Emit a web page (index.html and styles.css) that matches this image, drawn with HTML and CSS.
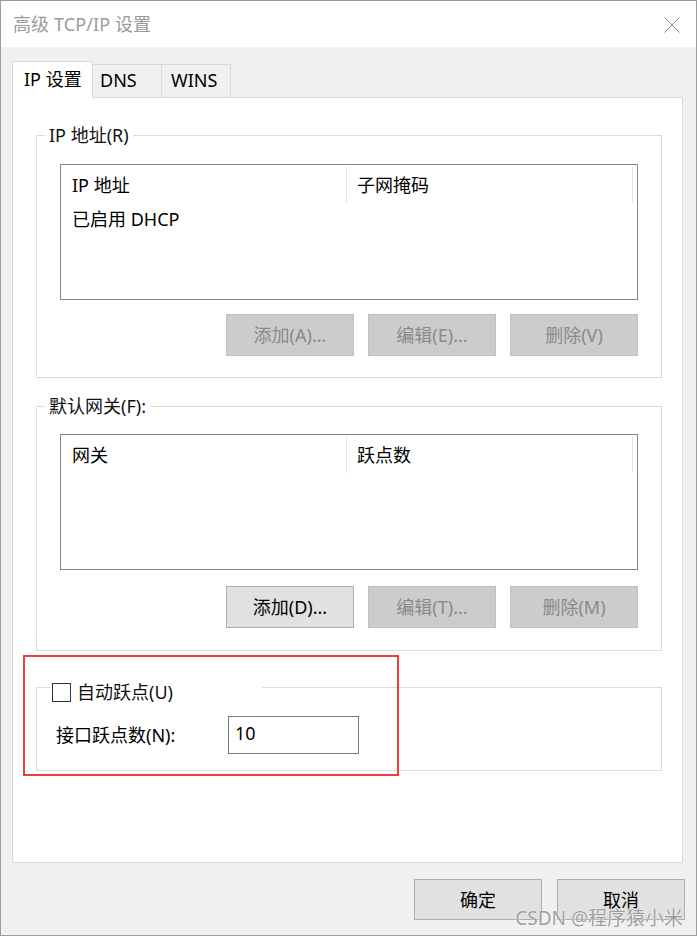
FILE: index.html
```html
<!DOCTYPE html>
<html lang="zh-CN">
<head>
<meta charset="utf-8">
<title>高级 TCP/IP 设置</title>
<link rel="stylesheet" href="styles.css">
</head>
<body>
<div class="window">
  <div class="titlebar">
    <span class="title">高级 TCP/IP 设置</span>
    <svg class="close" width="16" height="16" viewBox="0 0 16 16"><path d="M0.5 0.5 L15.5 15.5 M15.5 0.5 L0.5 15.5" stroke="#8a8a8a" stroke-width="1" fill="none"/></svg>
  </div>
  <div class="body">
    <div class="tabs">
      <div class="tab tab-active">IP 设置</div>
      <div class="tab tab-dns">DNS</div>
      <div class="tab tab-wins">WINS</div>
    </div>
    <div class="panel">
      <fieldset class="group group-ip">
        <legend class="legend">IP 地址(R)</legend>
        <div class="group-body">
          <div class="list">
            <div class="list-head">
              <div class="col col-1">IP 地址</div>
              <div class="col col-2">子网掩码</div>
            </div>
            <div class="list-row">已启用 DHCP</div>
          </div>
          <div class="btn-row btn-row-1">
            <div class="btn btn-disabled">添加(A)...</div>
            <div class="btn btn-disabled">编辑(E)...</div>
            <div class="btn btn-disabled">删除(V)</div>
          </div>
        </div>
      </fieldset>
      <fieldset class="group group-gw">
        <legend class="legend">默认网关(F):</legend>
        <div class="group-body">
          <div class="list">
            <div class="list-head">
              <div class="col col-1">网关</div>
              <div class="col col-2">跃点数</div>
            </div>
          </div>
          <div class="btn-row btn-row-2">
            <div class="btn">添加(D)...</div>
            <div class="btn btn-disabled">编辑(T)...</div>
            <div class="btn btn-disabled">删除(M)</div>
          </div>
        </div>
      </fieldset>
      <fieldset class="group group-metric">
        <legend class="legend legend-check">
          <span class="check-wrap"><span class="checkbox"></span><span class="check-label">自动跃点(U)</span></span>
        </legend>
        <div class="metric-row">
          <span class="metric-label">接口跃点数(N):</span>
          <div class="input">10</div>
        </div>
      </fieldset>
    </div>
    <div class="footer">
      <div class="btn btn-footer">确定</div>
      <div class="btn btn-footer">取消</div>
    </div>
  </div>
  <div class="highlight"></div>
  <div class="watermark">CSDN @程序猿小米</div>
</div>
</body>
</html>
```
FILE: styles.css
```css
html, body {
  margin: 0;
  padding: 0;
}
body {
  font-family: "Noto Sans", "Noto Sans CJK SC", sans-serif;
  font-size: 18px;
  color: #000;
  background: #f0f0f0;
}
.window {
  position: relative;
  width: 697px;
  height: 936px;
  box-sizing: border-box;
  border: 1px solid #9c9c9c;
  background: #f0f0f0;
  display: flex;
  flex-direction: column;
}
.titlebar {
  height: 46px;
  background: #fff;
  display: flex;
  align-items: center;
  padding-left: 12px;
  flex-shrink: 0;
}
.title {
  color: #9a9a9a;
  font-size: 18px;
  line-height: 24px;
  margin-top: -1px;
  letter-spacing: 0.1px;
}
.close {
  margin-left: auto;
  margin-right: 16px;
  margin-top: 1px;
}
.body {
  padding: 14px 13px 0 11px;
  display: flex;
  flex-direction: column;
}
.tabs {
  display: flex;
  align-items: flex-end;
  height: 36px;
  position: relative;
  z-index: 1;
}
.tab {
  box-sizing: border-box;
  height: 33px;
  line-height: 31px;
  border: 1px solid #d9d9d9;
  border-bottom: none;
  border-left: none;
  background: #f0f0f0;
  width: 69px;
}
.tab-active {
  height: 37px;
  line-height: 34px;
  width: 81px;
  border-left: 1px solid #d9d9d9;
  background: #fff;
  margin-bottom: -1px;
  padding-left: 11px;
}
.tab-dns {
  padding-left: 7px;
}
.tab-wins {
  padding-left: 9px;
}
.panel {
  box-sizing: border-box;
  height: 766px;
  border: 1px solid #d9d9d9;
  background: #fff;
  padding: 27px 20px 0 23px;
  display: flex;
  flex-direction: column;
}
.group {
  margin: 0;
  border: 1px solid #dcdcdc;
  padding: 0 0 0 8px;
  min-width: 0;
}
.legend {
  padding: 0 4px;
  line-height: 20px;
  color: #111;
}
.group-body {
  margin-left: 15px;
  margin-right: 23px;
}
.group-ip .group-body {
  padding: 19px 0 21px;
}
.group-gw {
  margin-top: 18px;
}
.group-gw .group-body {
  padding: 18px 0 22px;
}
.list {
  box-sizing: border-box;
  height: 136px;
  border: 1px solid #828790;
  background: #fff;
}
.list-head {
  display: flex;
  height: 40px;
}
.col {
  box-sizing: border-box;
  width: 286px;
  height: 36px;
  margin-top: 2px;
  line-height: 36px;
  border-right: 1px solid #e5e5e5;
}
.col-1 {
  width: 286px;
  padding-left: 11px;
}
.col-2 {
  width: 286px;
  padding-left: 10px;
}
.list-row {
  height: 28px;
  line-height: 28px;
  padding-left: 11px;
}
.btn-row {
  display: flex;
  justify-content: flex-end;
  gap: 14px;
}
.btn-row-1 {
  margin-top: 14px;
}
.btn-row-2 {
  margin-top: 16px;
}
.btn {
  box-sizing: border-box;
  width: 128px;
  height: 42px;
  border: 1px solid #adadad;
  background: #e1e1e1;
  display: flex;
  align-items: center;
  justify-content: center;
  line-height: 20px;
}
.btn-disabled {
  background: #cccccc;
  border-color: #bfbfbf;
  color: #8a8a8a;
}
.group-metric {
  margin-top: 21px;
  padding: 0 0 16px 13px;
}
.legend-check {
  box-sizing: border-box;
  width: 212px;
  padding: 10px 0 0 2px;
}
.check-wrap {
  display: flex;
  align-items: center;
  height: 20px;
}
.checkbox {
  box-sizing: border-box;
  width: 19px;
  height: 19px;
  border: 1px solid #333;
  background: #fff;
  flex-shrink: 0;
}
.check-label {
  margin-left: 6px;
  line-height: 20px;
}
.metric-row {
  display: flex;
  align-items: center;
  margin-top: 14px;
  margin-left: 6px;
}
.metric-label {
  width: 172px;
  line-height: 20px;
}
.input {
  box-sizing: border-box;
  width: 131px;
  height: 38px;
  border: 1px solid #7a7a7a;
  background: #fff;
  padding-left: 6px;
  line-height: 32px;
}
.footer {
  display: flex;
  justify-content: flex-end;
  gap: 15px;
  padding-top: 16px;
  margin-right: -2px;
}
.btn-footer {
  height: 41px;
}
.highlight {
  position: absolute;
  left: 22px;
  top: 654px;
  width: 376px;
  height: 121px;
  box-sizing: border-box;
  border: 2px solid #f03c3c;
}
.watermark {
  position: absolute;
  right: 13px;
  top: 906px;
  font-size: 19px;
  line-height: 22px;
  color: rgba(140, 140, 140, 0.85);
  text-shadow: 0 0 1px #fff, 0 0 1px #fff;
}
```
